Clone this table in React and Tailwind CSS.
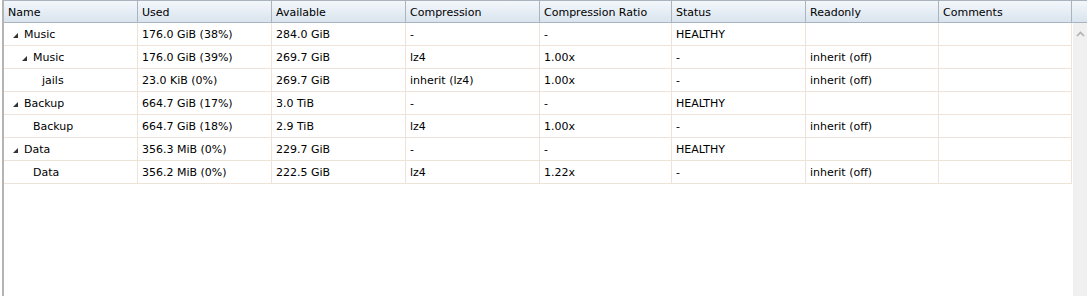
import React from "react";

const columns = [
  { label: "Name", w: "w-[134px]" },
  { label: "Used", w: "w-[134px]" },
  { label: "Available", w: "w-[134px]" },
  { label: "Compression", w: "w-[134px]" },
  { label: "Compression Ratio", w: "w-[132px]" },
  { label: "Status", w: "w-[134px]" },
  { label: "Readonly", w: "w-[133px]" },
  { label: "Comments", w: "w-[133px]" },
];

const rows = [
  { depth: 0, open: true, name: "Music", used: "176.0 GiB (38%)", avail: "284.0 GiB", comp: "-", ratio: "-", status: "HEALTHY", ro: "", note: "" },
  { depth: 1, open: true, name: "Music", used: "176.0 GiB (39%)", avail: "269.7 GiB", comp: "lz4", ratio: "1.00x", status: "-", ro: "inherit (off)", note: "" },
  { depth: 2, name: "jails", used: "23.0 KiB (0%)", avail: "269.7 GiB", comp: "inherit (lz4)", ratio: "1.00x", status: "-", ro: "inherit (off)", note: "" },
  { depth: 0, open: true, name: "Backup", used: "664.7 GiB (17%)", avail: "3.0 TiB", comp: "-", ratio: "-", status: "HEALTHY", ro: "", note: "" },
  { depth: 1, name: "Backup", used: "664.7 GiB (18%)", avail: "2.9 TiB", comp: "lz4", ratio: "1.00x", status: "-", ro: "inherit (off)", note: "" },
  { depth: 0, open: true, name: "Data", used: "356.3 MiB (0%)", avail: "229.7 GiB", comp: "-", ratio: "-", status: "HEALTHY", ro: "", note: "" },
  { depth: 1, name: "Data", used: "356.2 MiB (0%)", avail: "222.5 GiB", comp: "lz4", ratio: "1.22x", status: "-", ro: "inherit (off)", note: "" },
];

// expandable nodes start with the triangle, leaves line up with their siblings' text
const branchIndent = ["pl-[9px]", "pl-[18px]", "pl-[27px]"];
const leafIndent = ["pl-[20px]", "pl-[29px]", "pl-[38px]"];

function Expander() {
  return (
    <svg width="5" height="5" viewBox="0 0 5 5" className="mr-[6px] shrink-0">
      <polygon points="5,0 5,5 0,5" fill="#333" />
    </svg>
  );
}

function NameCell({ row }) {
  const pad = row.open ? branchIndent[row.depth] : leafIndent[row.depth];
  return (
    <div className={`${columns[0].w} flex items-center pt-[2px] border-r border-[#ede3d8] ${pad}`}>
      {row.open && <Expander />}
      <span>{row.name}</span>
    </div>
  );
}

export default function App() {
  return (
    <div className="w-[1087px] h-[296px] bg-white pl-[2px] overflow-hidden text-[11px] text-black" style={{ fontFamily: '"DejaVu Sans", Verdana, sans-serif' }}>
      <div className="h-full border-l-2 border-[#b4b4b4] flex flex-col">
        {/* column headers */}
        <div className="flex h-[23px] border-t border-b border-[#a9b4bf] bg-gradient-to-b from-[#f3f7fb] to-[#d9e4ee]">
          {columns.map((c) => (
            <div key={c.label} className={`${c.w} flex items-center pl-[4px] pt-[3px] border-r border-[#a9b4bf]`}>
              {c.label}
            </div>
          ))}
          <div className="flex-1" />
        </div>

        <div className="flex flex-1 min-h-0">
          {/* tree grid body */}
          <div className="flex flex-col">
            {rows.map((r, i) => (
              <div key={i} className="flex h-[23px] border-b border-[#ede3d8]">
                <NameCell row={r} />
                {[r.used, r.avail, r.comp, r.ratio, r.status, r.ro, r.note].map((v, j) => (
                  <div key={j} className={`${columns[j + 1].w} flex items-center pl-[4px] pt-[2px] border-r border-[#ede3d8]`}>
                    {v}
                  </div>
                ))}
              </div>
            ))}
          </div>

          {/* vertical scrollbar */}
          <div className="ml-[1px] flex-1 bg-[#f0f0f0] flex justify-center pt-[8px]">
            <svg width="9" height="6" viewBox="0 0 9 6">
              <path d="M1 5 L4.5 1.5 L8 5" fill="none" stroke="#b0b0b0" strokeWidth="1.6" />
            </svg>
          </div>
        </div>
      </div>
    </div>
  );
}
